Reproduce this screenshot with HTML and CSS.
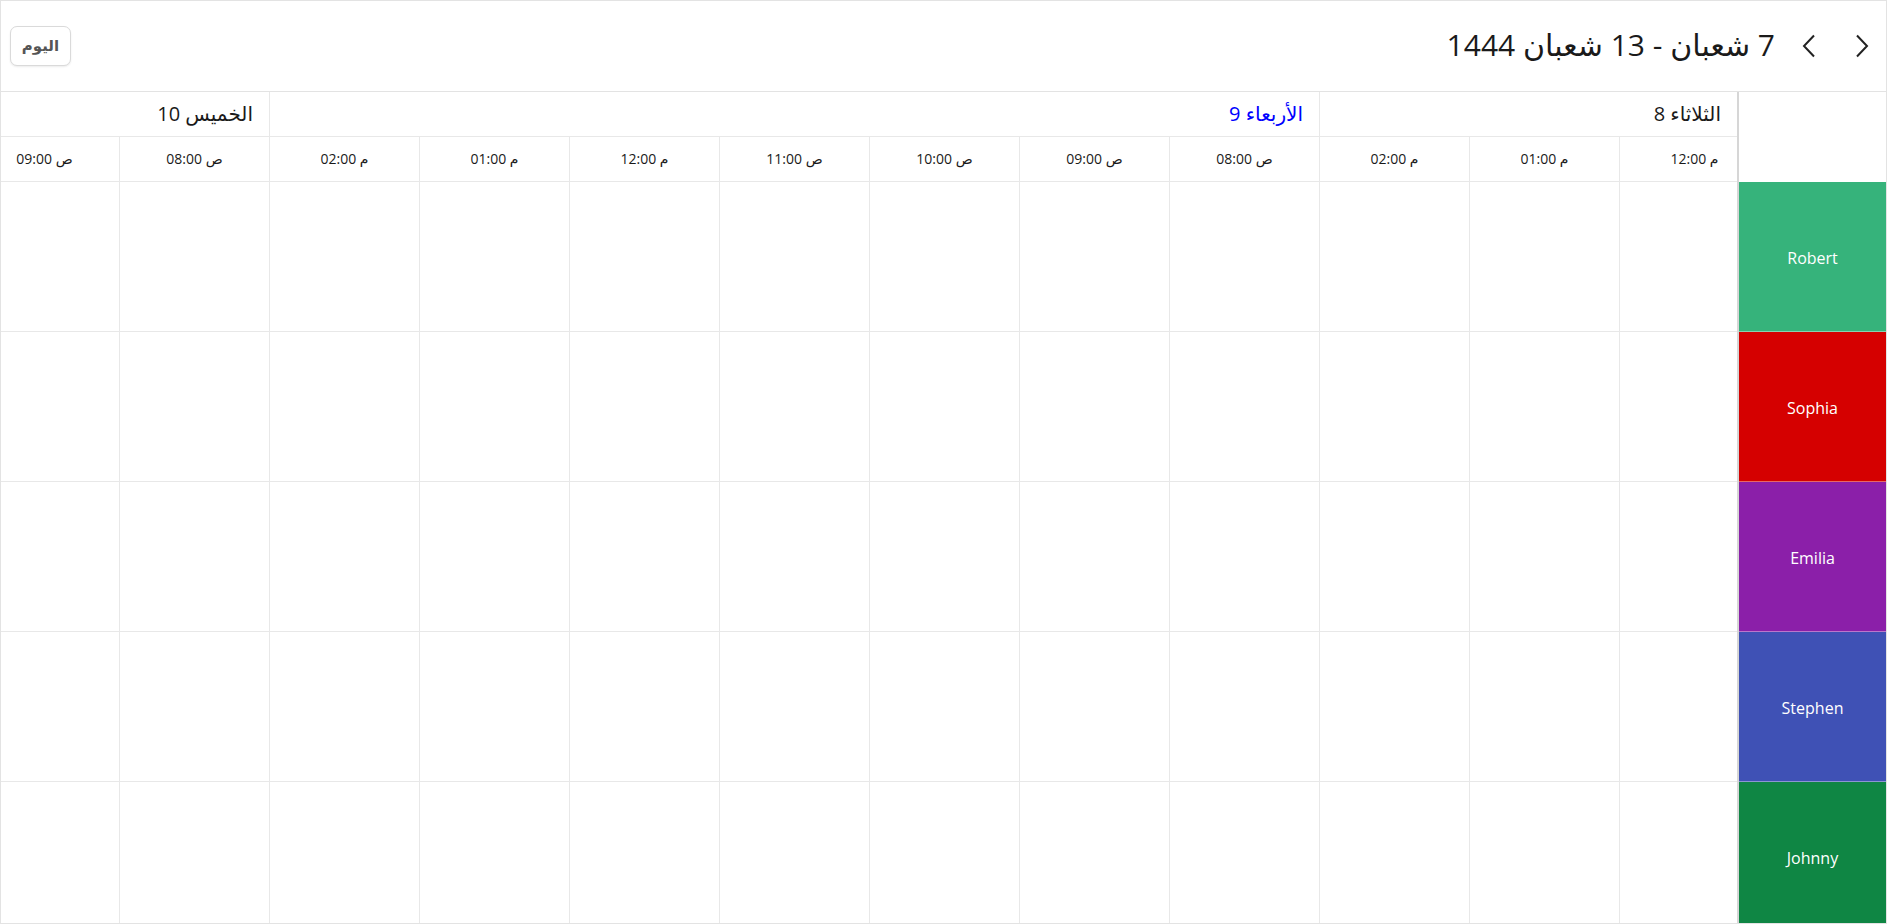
FILE: index.html
```html
<!DOCTYPE html>
<html lang="ar" dir="rtl">
<head>
<meta charset="utf-8">
<title>Scheduler</title>
<link rel="stylesheet" href="styles.css">
</head>
<body>
<div class="scheduler">
  <header class="toolbar">
    <div class="nav">
      <button class="nav-btn" aria-label="السابق">
        <svg width="14" height="24" viewBox="0 0 14 24"><path d="M2 1.5 L12 12 L2 22.5" fill="none" stroke="#222" stroke-width="2"/></svg>
      </button>
      <button class="nav-btn" aria-label="التالي">
        <svg width="14" height="24" viewBox="0 0 14 24"><path d="M12 1.5 L2 12 L12 22.5" fill="none" stroke="#222" stroke-width="2"/></svg>
      </button>
    </div>
    <h1 class="range">7 شعبان - 13 شعبان 1444</h1>
    <button class="today">اليوم</button>
  </header>

  <div class="body">
    <aside class="resources">
      <div class="res-head"></div>
      <div class="res res-robert">Robert</div>
      <div class="res res-sophia">Sophia</div>
      <div class="res res-emilia">Emilia</div>
      <div class="res res-stephen">Stephen</div>
      <div class="res res-johnny">Johnny</div>
    </aside>

    <div class="timeline">
      <div class="track">
        <div class="day span-3 day-first">الثلاثاء 8</div>
        <div class="day span-7 day-today">الأربعاء 9</div>
        <div class="day span-2">الخميس 10</div>

        <div class="slot"><span class="time">12:00 م</span></div>
        <div class="slot"><span class="time">01:00 م</span></div>
        <div class="slot"><span class="time">02:00 م</span></div>
        <div class="slot"><span class="time">08:00 ص</span></div>
        <div class="slot"><span class="time">09:00 ص</span></div>
        <div class="slot"><span class="time">10:00 ص</span></div>
        <div class="slot"><span class="time">11:00 ص</span></div>
        <div class="slot"><span class="time">12:00 م</span></div>
        <div class="slot"><span class="time">01:00 م</span></div>
        <div class="slot"><span class="time">02:00 م</span></div>
        <div class="slot"><span class="time">08:00 ص</span></div>
        <div class="slot"><span class="time">09:00 ص</span></div>

        <div class="lane"></div>
        <div class="lane"></div>
        <div class="lane"></div>
        <div class="lane"></div>
        <div class="lane"></div>
      </div>
    </div>
  </div>
</div>
</body>
</html>
```

FILE: styles.css
```css
* {
  box-sizing: border-box;
}

html, body {
  margin: 0;
  padding: 0;
  background: #fff;
}

body {
  font-family: "Open Sans", "DejaVu Sans", sans-serif;
  color: #1a1a1a;
}

.scheduler {
  width: 1887px;
  height: 924px;
  border: 1px solid #e3e3e3;
  display: flex;
  flex-direction: column;
  overflow: hidden;
  direction: rtl;
}

/* ---------- toolbar ---------- */
.toolbar {
  height: 91px;
  flex: none;
  display: flex;
  align-items: center;
  padding: 0 4px 0 9px;
  border-bottom: 1px solid #e3e3e3;
}

.nav {
  display: flex;
  align-items: center;
  gap: 13px;
}

.nav-btn {
  width: 40px;
  height: 40px;
  padding: 0;
  border: none;
  background: transparent;
  display: flex;
  align-items: center;
  justify-content: center;
}

.range {
  margin: 0 14px 0 0;
  font-size: 30px;
  font-weight: 400;
  line-height: 1;
  color: #1a1a1a;
  padding-bottom: 3px;
}

.today {
  margin-right: auto;
  width: 61px;
  height: 40px;
  padding: 0 0 3px;
  border: 1px solid #dadada;
  border-radius: 7px;
  background: #fff;
  box-shadow: 0 1px 2px rgba(0, 0, 0, 0.08);
  font-family: "Open Sans", "DejaVu Sans", sans-serif;
  font-size: 15px;
  font-weight: 700;
  color: #555;
}

/* ---------- body ---------- */
.body {
  flex: 1;
  display: flex;
  min-height: 0;
}

.resources {
  width: 149px;
  flex: none;
  border-left: 2px solid #d6d6d6;
  display: flex;
  flex-direction: column;
}

.res-head {
  height: 90px;
  flex: none;
  background: #fff;
}

.res {
  height: 150px;
  flex: none;
  display: flex;
  align-items: center;
  justify-content: center;
  padding-top: 3px;
  color: #fff;
  font-size: 16px;
  border-bottom: 1px solid rgba(255, 255, 255, 0.4);
}

.res-robert { background: #36b37b; }
.res-sophia { background: #d50000; }
.res-emilia { background: #8b1fa9; }
.res-stephen { background: #3f51b5; }
.res-johnny { background: #0f8644; }

.timeline {
  flex: 1;
  min-width: 0;
  overflow: hidden;
}

.track {
  width: 1800px;
  margin-right: -32px;
  display: grid;
  grid-template-columns: repeat(12, 150px);
  grid-auto-rows: auto;
}

.day {
  height: 45px;
  display: flex;
  align-items: center;
  padding: 0 16px 2px;
  font-size: 20px;
  border-left: 1px solid #e8e8e8;
  border-bottom: 1px solid #e8e8e8;
}

.day-first {
  padding-right: 48px;
}

.day-today {
  color: #0000ff;
}

.span-3 { grid-column: span 3; }
.span-7 { grid-column: span 7; }
.span-2 { grid-column: span 2; }

.slot {
  height: 45px;
  display: flex;
  align-items: center;
  justify-content: center;
  padding-bottom: 1px;
  font-size: 14px;
  border-left: 1px solid #e8e8e8;
  border-bottom: 1px solid #e8e8e8;
}

.time {
  direction: ltr;
  unicode-bidi: isolate;
}

.lane {
  grid-column: 1 / -1;
  height: 150px;
  border-bottom: 1px solid #e8e8e8;
  background-image: repeating-linear-gradient(to right, #e8e8e8 0 1px, transparent 1px 150px);
}
```
